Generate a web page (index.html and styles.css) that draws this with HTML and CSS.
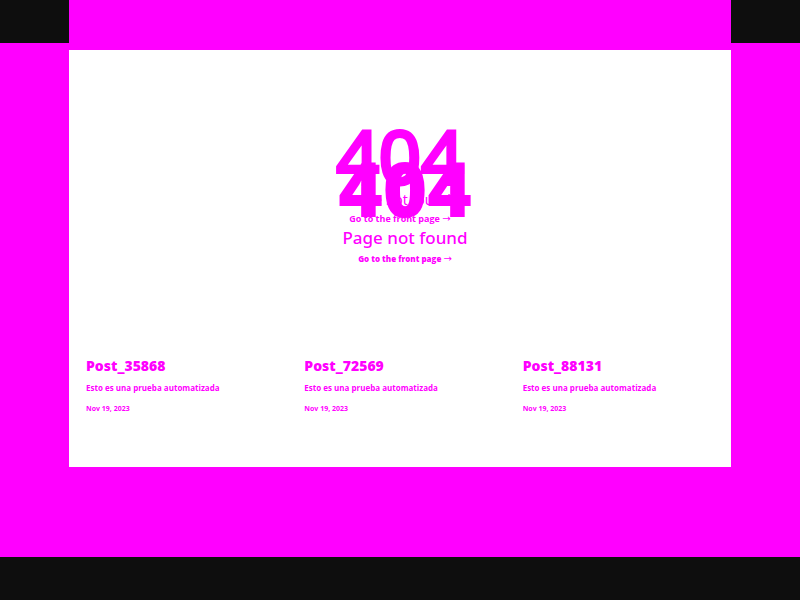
FILE: index.html
```
<!DOCTYPE html>
<html lang="en">
<head>
<meta charset="utf-8">
<title>Page not found</title>
<link rel="stylesheet" href="styles.css">
</head>
<body>
<header class="topbar"><div class="topbar-inner"></div></header>
<main class="page">
  <section class="errors">
    <div class="error error-front">
      <h1 class="code">404</h1>
      <p class="message">Page not found</p>
      <a class="home" href="#">Go to the front page <span class="arrow">→</span></a>
    </div>
    <div class="error error-back">
      <p class="code">404</p>
      <p class="message">Page not found</p>
      <a class="home" href="#">Go to the front page <span class="arrow">→</span></a>
    </div>
  </section>
  <section class="posts">
    <article class="post"><h2>Post_35868</h2><p>Esto es una prueba automatizada</p><time>Nov 19, 2023</time></article>
    <article class="post"><h2>Post_72569</h2><p>Esto es una prueba automatizada</p><time>Nov 19, 2023</time></article>
    <article class="post"><h2>Post_88131</h2><p>Esto es una prueba automatizada</p><time>Nov 19, 2023</time></article>
  </section>
</main>
<footer class="footer"></footer>
</body>
</html>
```
FILE: styles.css
```
* { box-sizing: border-box; }
body {
  margin: 0;
  min-height: 100vh;
  display: flex;
  flex-direction: column;
  background: #f0f;
  color: #f0f;
  font-family: "Open Sans", "Noto Sans", sans-serif;
}
h1, h2, p { margin: 0; }
a { color: inherit; text-decoration: none; }
.topbar { background: #0e0e0e; padding: 0 69px; }
.topbar-inner { height: 43px; background: #f0f; }
.page {
  margin: 7px 69px 90px;
  padding: 68px 0 50px;
  background: #fff;
}
.errors { position: relative; height: 236px; text-align: center; }
.error { display: flex; flex-direction: column; align-items: center; }
.error-front { padding: 32px 0 0 10px; }
.error-back { position: absolute; inset: 0; }
.code { font-size: 76px; line-height: 76px; font-weight: 500; }
.error-front .code { font-weight: 800; }
.error-back .code { font-size: 74px; -webkit-text-stroke: 4px #f0f; }
.message { font-family: "Noto Sans", sans-serif; font-size: 17px; line-height: 24px; font-weight: 500; }
.error-back .message { margin-top: -4px; font-size: 14px; line-height: 20px; font-weight: 400; }
.home { font-size: 8px; line-height: 18px; font-weight: 800; }
.error-back .home { font-size: 9px; font-weight: 700; }
.arrow { font-family: "DejaVu Sans", sans-serif; font-weight: 400; line-height: 1; font-size: 10px; }
.posts { display: grid; grid-template-columns: repeat(3, 1fr); padding: 0 4px 0 17px; column-gap: 14px; }
.post h2 { font-size: 14px; line-height: 24px; font-weight: 800; }
.post p { font-size: 8px; line-height: 20px; font-weight: 700; }
.post time { display: block; margin-top: 3px; font-size: 7px; line-height: 16px; font-weight: 700; }
.footer { flex: 1; min-height: 43px; background: #0e0e0e; }
```
